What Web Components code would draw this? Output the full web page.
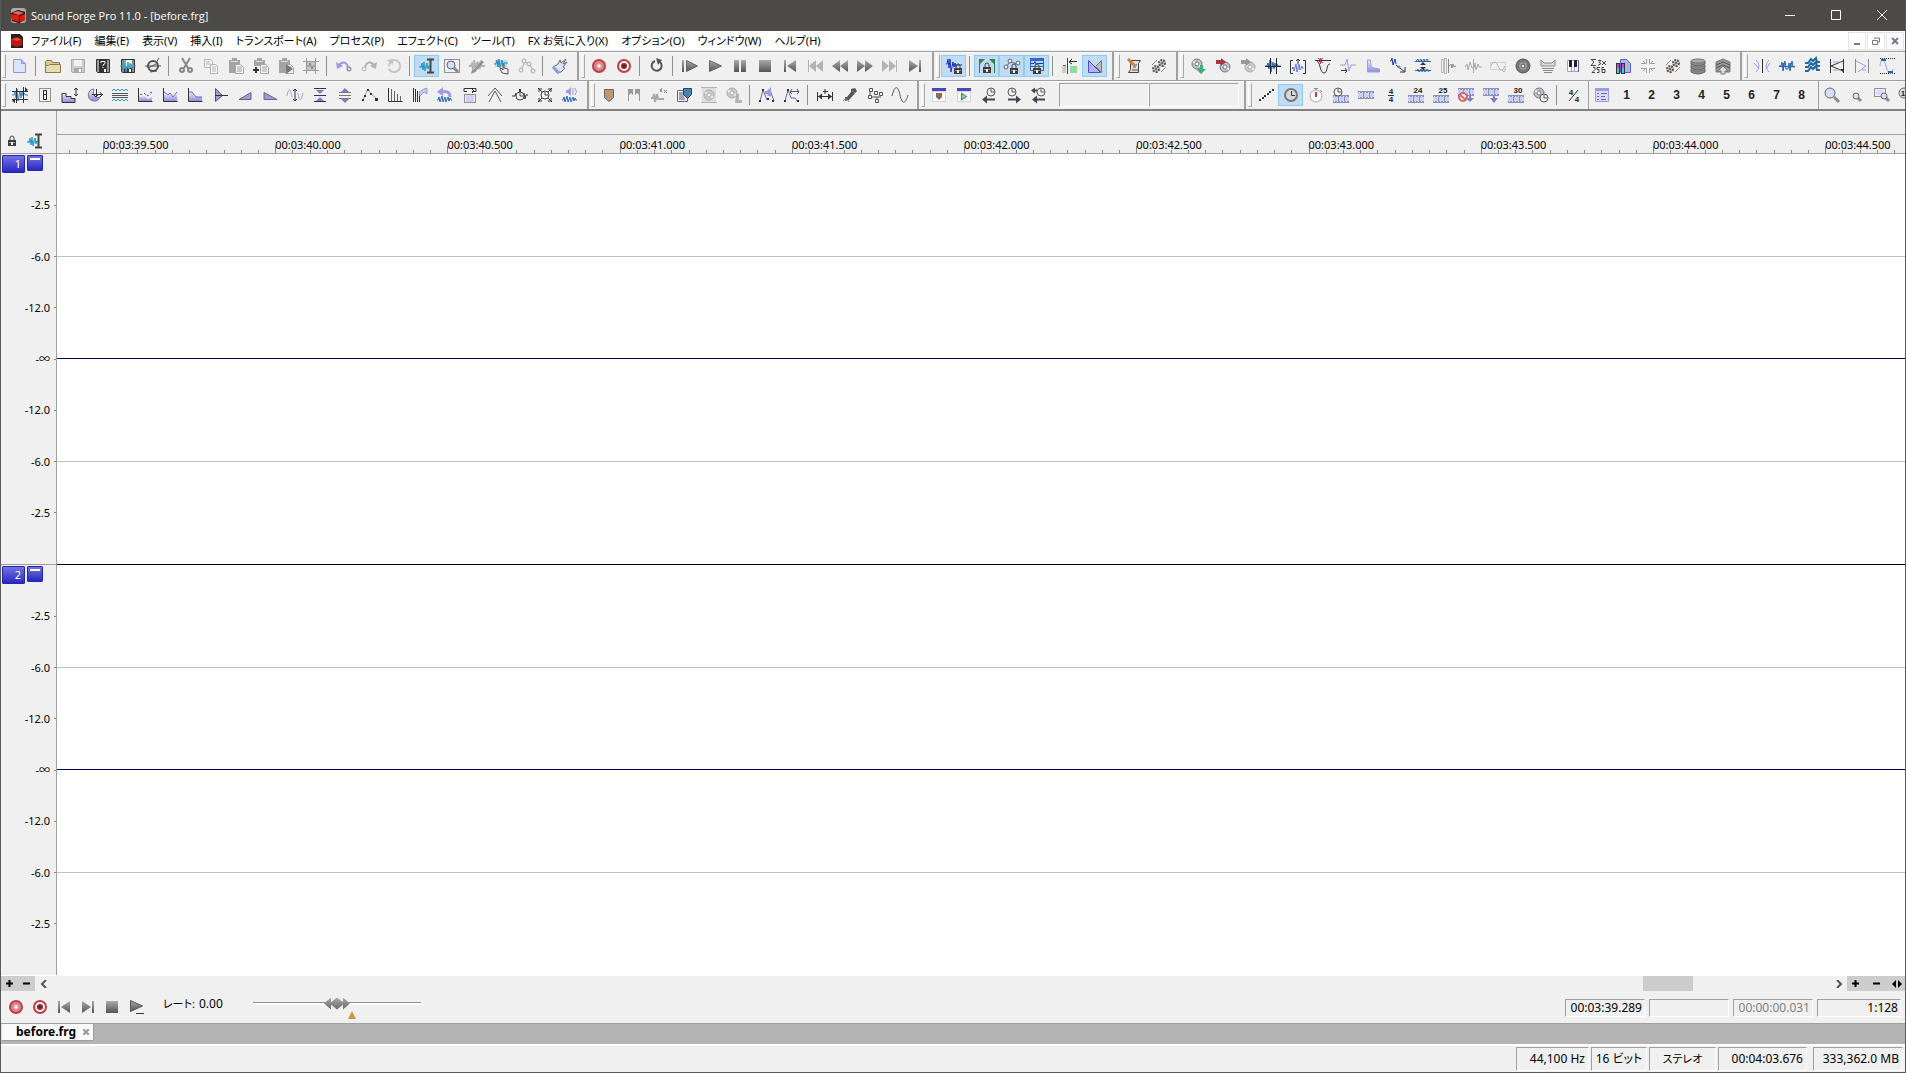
<!DOCTYPE html>
<html lang="ja">
<head>
<meta charset="utf-8">
<title>Sound Forge Pro 11.0 - [before.frg]</title>
<style>
  body {
    margin: 0;
    font: 12px/16px "Noto Sans", "Noto Sans CJK JP", sans-serif;
    color: #000;
    background: #f0f0f0;
  }
</style>
</head>
<body>
<sf-app></sf-app>

<script>
const K = '#333', G = '#888', D = '#b4b4b4', L = '#9c9ce0', B = '#2468b8', N = '#2030c8', R = '#c43c44';

const p = (d, stroke = K, fill = 'none', w = 1) => `<path d="${d}" stroke="${stroke}" fill="${fill}" stroke-width="${w}"/>`;
const f = (d, fill = K) => `<path d="${d}" fill="${fill}"/>`;
const r = (x, y, w, h, fill = K) => `<rect x="${x}" y="${y}" width="${w}" height="${h}" fill="${fill}"/>`;
const c = (x, y, rad, fill = 'none', stroke = K, w = 1) => `<circle cx="${x}" cy="${y}" r="${rad}" fill="${fill}" stroke="${stroke}" stroke-width="${w}"/>`;
const t = (x, y, s) => `<text x="${x}" y="${y}" text-anchor="middle" fill="#222">${s}</text>`;
const dot = (x, y, w, h, col = K) => `<rect x="${x}" y="${y}" width="${w}" height="${h}" fill="none" stroke="${col}" stroke-dasharray="1 1"/>`;
const wave = (col, w = 1) => p('M0 8h2l1-3 1 6 1-9 1 12 2-10 1 7 1-6 1 4 1-3 1 2h3', col, 'none', w);
const lowWave = col => p('M0 13h1l1-3 1 5 2-6 1 6 2-5 1 5 2-5 1 4 1-3 1 2h1', col, 'none', 1);
const film = (y = 8) => r(0, y, 16, 8, '#8a92bc') + r(0, y + 2, 16, 4, '#ccd0f4') +
  [1, 4, 7, 10, 13].map(x => r(x, y + 1, 1, 1, '#e8e8f8') + r(x, y + 6, 1, 1, '#e8e8f8')).join('') + r(5, y + 2, 1, 4, '#8a92bc') + r(11, y + 2, 1, 4, '#8a92bc');
const clock = (x, y, rad, col = '#555') => c(x, y, rad, '#f4f4f4', col) + p(`M${x} ${y - rad + 1}V${y}h${rad - 1}`, col);
const cd = (x, y, rad, a = '#bcc2d0', b = '#777') => c(x, y, rad, a, b) + p(`M${x} ${y}L${x - rad + 1} ${y - rad / 2}M${x} ${y}L${x + rad - 1} ${y + rad / 2}`, '#f2f2f2', 'none', 2) + c(x, y, 2, '#f8f8f8', b);
const lock = (x, y) => p(`M${x + 2} ${y + 4}v-2a2 2 0 0 1 4 0v2`, '#444', 'none', 1) + r(x, y + 4, 8, 6, '#3c3c3c') + r(x + 1, y + 6, 6, 1, '#999') + r(x + 3, y + 6, 2, 3, '#eee');
const glass = (x, y, rad) => p(`M${x + rad - 1} ${y + rad - 1}l${rad} ${rad}`, '#8a8a8a', 'none', 3) + c(x, y, rad, '#d4e0f4', '#667');
const disk = (a, b) => p('M1.5 1.5h13v13h-12l-1-1z', a, b) + r(4, 2, 8, 6, '#f0f0f0') + r(4, 10, 8, 4, a) + r(9, 11, 2, 3, '#fff');
const clip = (a, b) => r(1, 2, 11, 13, a) + r(4, 0, 5, 3, a) + r(3, 3, 7, 1, '#ddd') + p('M7.5 6.5h5l3 3v6h-8z', a, '#f4f4f4') + p(b, a);
const axes = p('M1.5 1v13.500h14');
const gear = (x, y, rad, col) => `<circle cx="${x}" cy="${y}" r="${rad}" fill="#ddd" stroke="${col}" stroke-width="2" stroke-dasharray="2 1"/>` + c(x, y, 1, '#fff', '#444');
const gears = gear(5, 11, 3, '#555') + gear(11, 5, 3, '#555') + p('M1 7l5-5M10 14l5-5', '#b88040');
const speaker = (x, y) => f(`M${x} ${y + 3}h2l3-3v9l-3-3h-2z`, L) + p(`M${x + 7} ${y + 1}v7`, L);
const winBox = inner => r(1, 1, 14, 14, '#cfd2ee') + r(2, 5, 12, 9, '#fafafa') + r(1, 1, 14, 3, '#4848b0') + inner;
const meta = `<defs><linearGradient id="m" x2="0" y2="1"><stop stop-color="#aaa"/><stop offset="1" stop-color="#555"/></linearGradient>
<linearGradient id="l" x2="0" y2="1"><stop stop-color="#ececff"/><stop offset="1" stop-color="#8c8cdc"/></linearGradient></defs>`;
const M = 'url(#m)', P = 'url(#l)';

const ICONS = {
  new: p('M1.500 1.500h8l4 4v9h-12z', '#9494e0', '#dbe5fa') + p('M9.500 1.500v4h4', '#9494e0', '#b8b8f4'),
  open: p('M.5 14.500v-11l1-1h5l1 2h7v10z', '#8a7c50', '#d8cc90') + p('M.5 14.500v-7h3l1-1h11v8z', '#8a7c50', '#e6dcb0'),
  save: disk('#aaa', '#ccc'),
  saveas: disk('#333', '#999') + r(4, 1, 8, 9, '#333') + p('M6 5v-1.500h4v2l-2 1.500v1M8 9v1', '#fff'),
  savewave: disk('#333', '#888') + wave('#38a8c8', 1),
  publish: c(8, 8, 5, '#ececec', '#555', 2) + p('M0 8h16M3 10l10-5M5 14l7-1M11 5l3-5', '#555', 'none', 1),
  cut: p('M4 0l6 10M12 0L6 10', G, 'none', 2) + c(4, 12, 2, 'none', G, 2) + c(12, 12, 2, 'none', G, 2),
  copy: p('M1.500 1.500h6l2 2v6h-8z', D, '#f4f4f4') + p('M3 4h4M3 6h4', D) + p('M7.500 6.500h5l2 2v7h-7z', D, '#f8f8f8') + p('M9 9h4M9 11h4M9 13h4', D),
  paste: clip('#a4a4a4', 'M9 9h5M9 11h5M9 13h5'),
  pastemix: clip('#a4a4a4', 'M9 9h5M9 11h5M9 13h5') + r(0, 8, 7, 8, '#f0f0f0') + r(2, 9, 2, 6) + r(0, 11, 6, 2),
  pasteplay: clip('#a4a4a4', 'M9 9h5') + f('M8 6l7 5-7 5z', '#777'),
  trim: r(3, 3, 10, 10, '#c4c4c4') + p('M0 3.500h16M0 12.500h16M3.500 0v16M12.500 0v16', '#999') + p('M4 8h2l1-3 2 6 1-3h2', G),
  undo: p('M3 8C5 3 11 3 12 10', L, 'none', 2) + f('M0 4l1 7 6-3z', L) + c(13, 11, 2, '#eee', '#667'),
  redo: p('M13 8C11 3 5 3 4 10', D, 'none', 2) + f('M16 4l-1 7-6-3z', D) + c(3, 11, 2, '#eee', D),
  repeat: p('M5 3a6 6 0 1 1-2 8M3 8a6 6 0 0 1 3-5', '#c4c4c4', 'none', 2) + f('M1 2l6-1v6z', '#c4c4c4'),
  edit: p('M0 9h2l1-4 1 7 1-8 1 9 2-8 1 6 1-3h2', '#2098c8', 'none', 1) + p('M1 9h9', '#2098c8') + p('M8 1.500h7M8 14.500h7M11.500 2v12', '#444', 'none', 2),
  magnify: dot(.5, 1.5, 15, 13) + glass(7, 7, 4),
  pencil: wave(D, 2) + f('M3 12l9-10 3 2-9 10-4 2z', '#929292') + p('M4 12l8-9', '#ccc'),
  event: r(1, 2, 12, 7, '#b4d4f0') + p('M0 6h2l1-4 1 7 1-8 1 9 2-8 1 6 1-3h4', '#248cbc', 'none', 1) + p('M8 15l-2-4 1-1 2 2v-6h1v4l4 1v5z', '#555', '#eee'),
  envelope: p('M2 12L6 4l4 2 4 6', '#aaa') + c(2, 12, 2, '#eee', '#aaa') + c(5, 3, 2, '#eee', '#aaa') + c(10, 6, 2, '#eee', '#aaa') + c(14, 13, 2, '#eee', '#aaa'),
  touch: p('M1 9l5-3 2-4 1 3 5-4-3 5 4-2-4 5 2 1-4 4-4 1z', '#667', '#dce4f4') + p('M1 9l6 6', '#8c9cdc', 'none', 3),
  rec: c(8, 8, 6, '#d8888c', R, 2) + c(8, 8, 2, '#fff', '#e8b0b0'),
  recarm: c(8, 8, 6, '#f8f0f0', R, 2) + c(8, 8, 2, '#401818', '#803038', 2),
  loop: p('M6 3a5 5 0 1 0 5 1', '#555', 'none', 2) + f('M7 0l6 2-4 5z', '#555'),
  playall: r(0, 2, 2, 12, M) + p('M4.500 2.500v11l11-5.500z', '#666', M),
  play: p('M2.500 2.500v11l12-5.500z', '#666', M),
  playdash: p('M2.500 1.500v11l12-5.500z', '#555', M) + r(8, 14, 8, 1),
  pause: r(2, 2, 5, 12, M) + r(9, 2, 5, 12, M),
  stop: r(2, 2, 12, 12, M),
  gostart: r(2, 2, 2, 12, M) + f('M14 2v12L5 8z', M),
  goend: r(12, 2, 2, 12, M) + f('M2 2v12l9-6z', M),
  back: r(1, 2, 1, 12, D) + f('M9 2v12L2 8zM16 2v12L9 8z', D),
  fwd: r(14, 2, 1, 12, D) + f('M0 2v12l7-6zM7 2v12l7-6z', D),
  rew: f('M8 2v12L0 8zM16 2v12L8 8z', M),
  ff: f('M0 2v12l8-6zM8 2v12l8-6z', M),
  wavelock: p('M0 6h1l1-5 1 9 1-9 1 13 2-10 1 5 1-4 1 4 1-2h5', N, 'none', 1) + lock(8, 6),
  regionlock: f('M0 1h6l-6 6zM16 1h-6l6 6z', '#388048') + r(0, 1, 1, 14, '#388048') + r(15, 1, 1, 14, '#388048') + lock(4, 5),
  envlock: p('M2 9L6 4l8 2', '#667') + c(2, 9, 2, '#def', '#667') + c(6, 3, 2, '#def', '#667') + c(14, 5, 2, '#def', '#667') + lock(6, 6),
  eventlock: r(1, 0, 14, 13, '#3c62c8') + r(2, 3, 12, 5, '#a8e0f0') + p('M2 5.500h3l1-2 1 3 1-1h6', N) + r(2, 9, 12, 3, '#c8dcf4') + lock(4, 6),
  autosnap: p('M5.500 0v16', '#444') + p('M7 3.500h8M10 1l-3 3 3 2') + r(0, 8, 4, 7, '#ccc') + r(8, 8, 7, 7, '#90dca0') + p('M1 7.500h3', '#666'),
  crossfade: p('M1.500 2.500v12h12z', '#5050c4', '#b0b4f4') + p('M14.500 2.500v12l-6-6z', '#777', '#bbb'),
  script: p('M3.500 2.500h11l-2 3v9h-10l2-3v-6z', '#444', '#e6dfcb') + p('M7 7h4M7 9h3M6 12h6', '#555') + p('M2 1l6 6', '#d08040', 'none', 3),
  gears: gears,
  cddown: cd(7, 6, 5) + f('M10 7h3v4h3l-5 5-5-5h4z', '#40b078'),
  cdin: cd(10, 9, 5) + f('M1 2h5V0l5 4-5 4V6H1z', '#a83440'),
  cdout: cd(10, 9, 5, '#ccc', '#aaa') + f('M1 2h5V0l5 4-5 4V6H1z', '#999'),
  wavecut: wave(B, 1) + p('M3 8v-3M4 11V6M6 3v10', B, 'none', 1) + p('M5.500 0v16M11.500 0v16M0 8.500h16', '#223'),
  wavebracket: p('M3 2.500H.5v13H3M13 2.500h2.500v13H13M8 6V1M6 3l2-2 2 2', K) + p('M2 11l1-2 1 4 2-7 1 8 2-8 1 6 2-4 1 3', '#6878d8', 'none', 1),
  peak: p('M0 2.500h16', K) + p('M2 3c3 0 3 12 7 12s2-9 6-9', K) + p('M3 0l5 5M8 0L3 5M5.500 0v6', R),
  wavearrow: p('M0 7h5l2-6 2 12 2-6h5', L) + p('M1 12.500h6M5 10l2 3-2 2', K),
  fadecurve: f('M2 2h3c0 7 2 8 9 8v4H2z', P) + p('M2.500 2v12h12v-3c-7 0-9-1-9-9z', L),
  wavediag: p('M0 3h1l1-3 1 7 2-6 1 5', N) + p('M6 7l9 7M10 14h5V9', K) + c(9, 9, 1, '#fff', B),
  wavesqueeze: p('M1 3l2-2 1 3 2-3 1 3 2-3 1 3 2-3 2 3M1 13l2-2 1 3 2-3 1 3 2-3 1 3 2-3 2 3', B, 'none', 1) + p('M0 3.500h16M0 12.500h16', B) + f('M8 4l3 3H5zM8 12l3-3H5z'),
  noise: dot(1.5, 1.5, 2, 13, G) + dot(4.5, .5, 2, 15, G) + p('M8.500 1v14M9 8l2-2 1 4 1-4 1 3 2-1', G),
  noisecut: p('M0 9l2-3 1 6 2-8 2 6h2l1-5 1 7 2-6 1 3h3M8.500 1v14', '#aaa'),
  sinedim: dot(.5, 4.5, 15, 7, D) + p('M1 8c3-7 6-3 7 0s4 7 7 0M11 11l3 3 2-3', D),
  vinyl: c(8, 8, 7, '#777', '#555') + c(8, 8, 4, '#aaa', '#888') + c(8, 8, 2, '#eee', '#444'),
  eq: p('M1 2l3 3h8l3-3v6H1z', '#888', '#ddd') + p('M2 10.500h12M3 12.500h10M4 14.500h8', G),
  piano: p('M2.500 2.500h11v11h-11z', L, '#fff') + p('M6.500 8v6M9.500 8v6', L) + r(4, 2, 3, 7, '#223') + r(9, 2, 3, 7, '#223') + r(13, 2, 1, 12, '#6060a0'),
  sigma: p('M6 1.500H1L4 4 1 7.500h5M8 2.500h3l-2 2 2 1-3 2M12 3l4 4M16 3l-4 4M3 9.500h2v2L2 14.500h3M10 9.500H7v2h2v3H7M14 9.500h-2v5h3v-3h-3', '#444'),
  library: p('M5.500 1.500h6l4 4v9h-10z', '#6060c0', '#a8b4f0') + r(1, 5, 4, 11) + r(2, 6, 2, 4, '#d048c0') + r(2, 10, 2, 5, '#48c8c0') + r(6, 5, 4, 11) + r(7, 6, 2, 4, '#d048c0') + r(7, 10, 2, 5, '#48c8c0'),
  burst: p('M6.500 1v4.500H1M9.500 1v4.500H15M6.500 15v-4.500H1M9.500 15v-4.500H15', '#a0a0a0') + p('M6 6L3 3M10 6l3-3M6 10l-3 3M10 10l3 3', '#a0a0a0'),
  stack: [9, 5, 1].map(y => p(`M1 ${y + 2}v3q7 4 14 0v-3`, '#666', '#888') + `<ellipse cx="8" cy="${y + 2}" rx="7" ry="2" fill="#aaa" stroke="#777"/>`).join(''),
  stackup: p('M1 4l7-3 7 3v10H1z', '#777', '#999') + p('M1 7l7-3 7 3M1 10l7-3 7 3', '#555') + p('M8 8l5 5h-3v3H6v-3H3z', '#777', '#ddd'),
  mirror: p('M8.500 1v14', K) + p('M2 2q6 6 0 12M0 5l5 6M15 2q-6 6 0 12M16 5l-4 6', L),
  twowaves: p('M0 8h2l1-4 1 9 2-10 1 8h2l1-6 1 8 2-10 1 6h2M0 8.500h16', B, 'none', 1) + p('M4.500 5v7M11.500 5v7', B, 'none', 1),
  waves: [3, 7, 11].map(y => p(`M1 ${y + 2}h3l3-4 2 2 3-3 1 4h3`, '#2468a0', 'none', 2)).join(''),
  envstart: p('M1.500 1v14M14.500 1v14M2 8l12-5M2 8l12 5', K) + p('M4 4h9M4 12h9', L) + f('M11 11h3v3z'),
  envend: p('M1.500 1v14M14.500 1v14', G) + p('M2 3l10 5-8 6M8 12h4', L),
  sineline: `<path d="M1 .5h15M1 15.500h15" stroke="${K}" stroke-dasharray="1 1"/>` + p('M1 8c1-8 4-8 6 0s5 10 7 3', L, 'none', 1) + r(2, 1, 5, 2, B) + r(9, 13, 5, 2, B),

  crop: wave('#3888cc', 1) + p('M0 4.500h16M0 12.500h16M4.500 1v15M11.500 0v16', '#333') + f('M13 0l3 3-3 2zM3 11l-3 3 3 2z'),
  eight: dot(2.5, 1.5, 11, 13) + p('M6.500 3.500h3v4h-3zM6.500 7.500h3v5h-3z', '#222', 'none', 1),
  stairs: p('M0 15.500V6.500h4v3h5v2h4v4z', K, P) + p('M14 1v8M12 3l2-2 2 2M12 7l2 2 2-2', K),
  moon: p('M7 2a6 6 0 1 0 6 8c-5 2-8-2-6-8z', '#778', P) + p('M5 7.500h11M13 5l2 3-2 2M9.500 2v8M7 8l2 2 2-2'),
  fourwaves: [3, 13].map(y => p(`M0 ${y + 1}l2-2 2 2 2-2 2 2 2-2 2 2 2-2 2 2`, '#28a0d0')).join('') + p('M0 6.500h16M0 8.500h16M0 10.500h16', '#555'),
  graph1: axes + f('M2 14V8l3 2 3-1 3 3 4-2v4z', P) + p('M3 7l2 1M7 6l2 2M10 8l2 1M13 5l2 1', '#4848c0'),
  graph2: axes + f('M2 14V6l3 3 3-2 3 3 4-3v7z', P) + p('M2 5l4 3 2-2 3 4 4-5', '#6868c0'),
  graph3: axes + f('M2 14V5h3l3 5h7v4z', P) + p('M2 5h3l4 5h6', '#6868c0'),
  wedge: p('M3.500 1.500v13l7-6z', '#556', L) + p('M3 8.500h13'),
  rise: p('M2 12.500h12v-7z', '#667', L),
  fall: p('M2 5.500v7h13z', '#667', L),
  sinearrow: p('M0 9c2-10 4-6 5 1M11 6c1 9 3 9 5 0', L) + p('M8 2v12M6 4l2-2 2 2M6 12l2 2 2-2', K),
  compress: p('M2 1.500h12M2 8.500h12M2 14.500h12') + f('M8 7l4-4H4zM8 10l4 4H4z', '#7c7ccc'),
  expand: p('M2 5.500h12M2 8.500h12M2 11.500h12', '#777') + f('M8 1l4 4H4zM8 16l4-4H4z', '#7c7ccc'),
  points: p('M1 13L6 2l3 5 5 4', L, 'none', 1) + r(0, 12, 2, 2) + r(2, 8, 2, 2) + r(5, 2, 2, 2) + r(8, 6, 2, 2) + r(13, 11, 3, 3),
  bars: axes + p('M4.500 2v12M7.500 4v10M10.500 7v7M13.500 9v5', '#667'),
  barswoosh: p('M1.500 1v14M3.500 2v13M5.500 4v11M7.500 7v8', K) + p('M7 5l5-3 3-1v6l-3-2-4 4z', L, '#c8c8f4'),
  wavebacks: lowWave(B) + p('M4 5c8-2 9 2 9 5', L, 'none', 3) + f('M0 5l6-5v9z', L),
  reel: p('M5 4.500H2v-3h12v3h-4M10 2l2 2-2 2', K) + r(4, 8, 8, 7, '#d0d0f8') + dot(2.5, 7.5, 11, 8),
  peaks: p('M2 15L8 4l6 11M1 9l7-8 7 8', '#555'),
  clockwave: p('M0 9h3l1-3M12 6l1 6 1-4h2', K) + clock(8, 9, 4, '#345') + r(7, 2, 2, 3),
  clockbox: clock(8, 8, 4, '#345') + p('M2 5V2h3M11 2h3v3M2 11v3h3M11 14h3v-3M1 1l4 4M15 1l-4 4M1 15l4-4M15 15l-4-4'),
  speakerwave: speaker(4, 0) + p('M13 1q3 4 0 7', L) + lowWave(B),

  marker: p('M3.500 2.500h9v8l-4.500 4-4.500-4z', '#666', '#b89878'),
  region: f('M2 2h5v6l-2-2-3 3zM14 2H9v6l2-2 3 3z', '#999') + p('M2.500 2v12M13.500 2v12', '#999'),
  sparkwave: p('M0 11h2l1-4 1 8 2-8 1 5h6', '#aaa', 'none', 2) + p('M9 2l2 3M11 1l-2 4M13 3l3 3M16 3l-3 3', G),
  markerpage: p('M1.500 3.500h10v11h-10z', '#667', '#f0f0f8') + p('M3 6h6M3 8h5M3 10h5M3 12h6', '#557') + p('M7.500 1.500h8v6l-4 4-4-4z', '#345', '#4884b0'),
  discpage: r(1, 1, 14, 14, '#ddd') + p('M0 .5h16M0 15.500h16', D) + cd(8, 8, 5, '#ccc', '#aaa'),
  disccursor: cd(6, 6, 5, '#ccc', '#aaa') + f('M10 7h3v6h3v3h-7z', D),
  envspeaker: p('M1 14L4 3l4 10M9 9l2-6 4 11', '#6868a8') + f('M6 4h2l4-4v10L8 7H6z', L) + r(0, 13, 2, 2) + r(3, 2, 2, 2) + r(13, 13, 2, 2) + r(8, 11, 2, 2),
  envarrows: p('M1 14L4 3l3 8 4 0 3 4', '#6868a8') + p('M6 4.500h9M8 2L6 5l2 2M13 2l2 3-2 2', '#556') + r(0, 13, 2, 2) + r(3, 2, 2, 2) + r(13, 13, 2, 2),
  measure: p('M.5 5v9M15.500 5v9M1 9.500h14M8 2v5M6 4.500h5', K) + f('M1 9.500l4-3v6zM15 9.500l-4-3v6z'),
  phone: f('M9 2l4-1 2 3-8 9-4 1 0-4 2 0 4-5z', '#555') + p('M1 14q3-5 6 1M10 4l3 2', '#888'),
  nodes: p('M2.500 1.500h3v3h-3zM7.500 4.500h3v3h-3zM12.500 5.500h3v3h-3zM1.500 8.500h3v3h-3zM8.500 12.500h3v3h-3zM3 5v3M5 10h9M10 10v2', '#555'),
  sine: p('M0 9C3-3 6-1 8 8s5 10 8 0', '#556'),
  winmarker: winBox(f('M5 6h6v4l-3 3-3-3z', '#886858')),
  winplay: winBox(p('M5.500 6v7l5-3.500z', '#388058', '#90d0a0')),
  clockleft: clock(10, 5, 4) + p('M3 12.500h11', '#445', 'none', 2) + f('M1 12.500l5-4v8z', '#445'),
  clockright: clock(6, 5, 4) + p('M2 12.500h11', '#445', 'none', 2) + f('M15 12.500l-5-4v8z', '#445'),
  clockboth: clock(10, 5, 4) + p('M3 12.500h11M2 3.500h4', '#445', 'none', 2) + f('M1 12.500l5-4v8zM0 3.500l4-3v6z', '#445'),

  dots: [[1, 12], [4, 10], [6, 8], [9, 6], [11, 4], [14, 2]].map(([x, y]) => r(x, y, 2, 2)).join(''),
  clock: c(8, 8, 6, '#d8d8d8', '#777', 2) + p('M8.500 4v4.500H12', '#333', 'none', 1),
  stopwatch: c(8, 9, 6, '#fafafa', '#aaa') + p('M8 5v5', R, 'none', 2) + p('M6 1.500h4M8 1v2', '#888') + p('M12 3l2 2', G),
  clockfilm: film() + clock(5, 5, 4),
  film: film(4),
  beat: t(8, 7, '4') + p('M5 8.500h6') + t(8, 15, '4'),
  f24: film() + t(10, 6, '24'),
  f25: film() + t(10, 6, '25'),
  f30: film() + t(10, 6, '30'),
  nofilm: film(1) + p('M12 8v5', '#7c7ccc', 'none', 2) + f('M8 11h8l-4 4z', '#7c7ccc') + c(5, 10, 4, '#eee', '#d06868', 2) + p('M2 8l6 5', '#d06868', 'none', 2),
  filmdown: film(1) + p('M11 8v5', '#7c7ccc', 'none', 2) + f('M7 11h8l-4 5z', '#7c7ccc'),
  cdclock: cd(6, 6, 5) + clock(11, 11, 4),
  meter: t(5, 8, '4') + t(11, 15, '4') + p('M3 14L12 3'),
  list: p('M1.500 1.500h13v13h-13z', L, '#dcdcfa') + r(1, 1, 14, 3, L) + p('M3 6.500h2M7 6.500h6M3 9.500h2M7 9.500h4M3 12.500h2M7 12.500h5', '#6868c0'),
  magbig: glass(6, 6, 5),
  magsmall: glass(7, 9, 3),
  magselect: dot(.5, 1.5, 11, 8) + r(2, 3, 8, 5, '#dcdcfa') + glass(10, 9, 3),
  magone: glass(5, 6, 5) + t(4, 9, '1'),
  lock: `<g transform="translate(4 3)">${lock(0, 0)}</g>`
};

const svg = name => `<svg width="16" height="16" viewBox="0 0 16 16" aria-hidden="true">${meta}${ICONS[name] || ''}</svg>`;

class ToolBand extends HTMLElement {
  constructor() {
    super();
    this.attachShadow({ mode: 'open' });
  }

  // items: icon names, "|" for a separator, "*" before a pressed button, a digit for a text button
  connectedCallback() {
    const items = this.getAttribute('items').split(' ').map(item => {
      if (item === '|') {
        return '<i></i>';
      }
      const on = item[0] === '*';
      const name = on ? item.slice(1) : item;
      const face = ICONS[name] ? svg(name) : name;
      return `<button type="button" aria-label="${name}" ${on ? 'class="on" aria-pressed="true"' : ''}>${face}</button>`;
    });
    this.shadowRoot.innerHTML = `
      <style>
        :host {
          display: flex;
          flex: none;
          align-items: center;
          box-sizing: border-box;
          height: 28px;
          padding: 0 5px 0 6px;
          border-right: 2px solid #a0a0a0;
          margin-right: 1px;
          position: relative;
        }

        :host([grip])::before {
          content: "";
          position: absolute;
          left: 1px;
          top: 2px;
          bottom: 2px;
          width: 2px;
          border: 1px solid #a8a8a8;
          border-top-color: #fff;
          border-left-color: #fff;
        }

        :host([plain]) {
          padding: 0 4px 0 0;
        }

        :host([tight]) {
          padding-right: 2px;
        }

        :host([plain]), :host([tight]) {
          border-right-width: 1px;
          margin: 0;
        }

        :host([last]) {
          border-right: 0;
        }

        button {
          width: 25px;
          height: 22px;
          flex: none;
          display: flex;
          align-items: center;
          justify-content: center;
          padding: 0;
          border: 1px solid transparent;
          background: none;
          color: #222;
          font: bold 12px/16px "Liberation Sans", sans-serif;
        }

        .on {
          background: #c0dcf3;
          border-color: #90c8f6;
        }

        i {
          width: 1px;
          height: 20px;
          margin: 0 4px 0 3px;
          background: #909090;
        }

        svg {
          overflow: visible;
        }

        text {
          font: bold 8px "Liberation Sans", sans-serif;
        }
      </style>
      ${items.join('')}
      <slot></slot>
    `;
  }
}
customElements.define('tool-band', ToolBand);

class SfBox extends HTMLElement {
  constructor() {
    super();
    this.attachShadow({ mode: 'open' });
    this.shadowRoot.innerHTML = `
      <style>
        :host {
          display: block;
          flex: none;
          box-sizing: border-box;
          height: 18px;
          padding: 0 2px;
          border: 1px solid #fff;
          border-top-color: #a0a0a0;
          border-left-color: #a0a0a0;
          text-align: right;
          white-space: nowrap;
        }
      </style>
      <slot></slot>
    `;
  }
}
customElements.define('sf-box', SfBox);

class TitleBar extends HTMLElement {
  constructor() {
    super();
    this.attachShadow({ mode: 'open' });
    this.shadowRoot.innerHTML = `
      <style>
        :host {
          display: flex;
          align-items: center;
          height: 31px;
          flex: none;
          background: #4b4a47;
          color: #fff;
          padding-left: 9px;
        }

        h1 {
          flex: 1;
          margin: 0 0 0 5px;
          font: 11px/16px "Open Sans", "Noto Sans", sans-serif;
        }

        button {
          width: 46px;
          height: 30px;
          padding: 0;
          border: 0;
          background: none;
        }
      </style>
      <svg width="16" height="16" viewBox="0 0 16 16"><rect x="1" y="0" width="15" height="15" rx="3" fill="#aaa"/><path d="M1 5l7-3 7 2v8l-6 3-7-2z" fill="#200"/><path d="M2 5l6-2 6 2-5 2z" fill="#e66"/><path d="M1 6l8 1v7l-7-2zM10 8l5-2v6l-5 2z" fill="#d8200c"/></svg>
      <h1><slot></slot></h1>
      <button aria-label="Minimize"><svg width="10" height="10"><path d="M0 5.500h10" stroke="#fff"/></svg></button>
      <button aria-label="Maximize"><svg width="10" height="10"><path d="M.5.500h9v9h-9z" stroke="#fff" fill="none"/></svg></button>
      <button aria-label="Close"><svg width="10" height="10"><path d="M0 0l10 10M10 0L0 10" stroke="#fff"/></svg></button>
    `;
  }
}
customElements.define('title-bar', TitleBar);

class MenuBar extends HTMLElement {
  constructor() {
    super();
    this.attachShadow({ mode: 'open' });
    const menus = ['ファイル(F)', '編集(E)', '表示(V)', '挿入(I)', 'トランスポート(A)', 'プロセス(P)', 'エフェクト(C)', 'ツール(T)', 'FX お気に入り(X)', 'オプション(O)', 'ウィンドウ(W)', 'ヘルプ(H)'];
    this.shadowRoot.innerHTML = `
      <style>
        :host {
          display: flex;
          align-items: center;
          height: 19px;
          flex: none;
          background: #fff;
          padding-left: 9px;
          border-bottom: 1px solid #f0f0f0;
        }

        nav {
          display: flex;
          flex: 1;
          gap: 13px;
          margin-left: 7px;
        }

        nav button {
          padding: 0;
          border: 0;
          background: none;
          color: #000;
          font: 11px/18px "Noto Sans", "Noto Sans CJK JP", sans-serif;
          font-feature-settings: "palt";
          white-space: nowrap;
        }

        .win {
          width: 18px;
          height: 18px;
          margin-right: 1px;
          padding: 0;
          border: 1px solid #e4e4e4;
          background: #fff;
        }

        .win svg {
          display: block;
          margin: auto;
        }
      </style>
      <svg width="14" height="16" viewBox="0 0 14 16"><path d="M1 1h9l3 3v11H1z" fill="#222"/><path d="M1 6l6-2 5 2v6l-5 2-6-2z" fill="#c01810"/><path d="M2 6l5-1 4 1-4 2z" fill="#f05030"/></svg>
      <nav>${menus.map(m => `<button type="button">${m}</button>`).join('')}</nav>
      <button class="win" aria-label="Minimize document"><svg width="8" height="8"><path d="M1 7h6" stroke="#6c7c8c" stroke-width="2"/></svg></button>
      <button class="win" aria-label="Restore document"><svg width="8" height="8"><path d="M2.500 2V1h5v4H6M.5 3.500h5v4h-5z" stroke="#6c7c8c" fill="none"/></svg></button>
      <button class="win" aria-label="Close document"><svg width="8" height="8"><path d="M1 1l6 6M7 1L1 7" stroke="#6c7c8c" stroke-width="2"/></svg></button>
    `;
  }
}
customElements.define('menu-bar', MenuBar);

class SfToolbars extends HTMLElement {
  constructor() {
    super();
    this.attachShadow({ mode: 'open' });
    this.shadowRoot.innerHTML = `
      <style>
        :host {
          display: block;
          flex: none;
          border-top: 1px solid #a0a0a0;
        }

        .row {
          display: flex;
          height: 28px;
          overflow: hidden;
          border-bottom: 1px solid #a0a0a0;
          box-shadow: inset 0 1px #fafafa;
        }

        .row:last-child {
          border-bottom: 2px solid #808080;
        }

        sf-box {
          width: 90px;
          height: 24px;
        }

        sf-box:first-of-type {
          margin-left: 8px;
        }
      </style>
      <div class="row">
        <tool-band grip items="new | open save saveas savewave publish | cut copy paste pastemix pasteplay trim | undo redo repeat | *edit magnify pencil event envelope | touch"></tool-band>
        <tool-band grip items="rec recarm | loop | playall play pause stop gostart back rew ff fwd goend"></tool-band>
        <tool-band grip items="*wavelock | *regionlock *envlock *eventlock | autosnap *crossfade"></tool-band>
        <tool-band grip items="script gears"></tool-band>
        <tool-band grip items="cddown cdin cdout wavecut wavebracket peak wavearrow fadecurve wavediag wavesqueeze noise noisecut sinedim vinyl eq piano sigma library burst gears stack stackup"></tool-band>
        <tool-band grip last items="mirror twowaves waves envstart envend sineline burst"></tool-band>
      </div>
      <div class="row">
        <tool-band grip items="crop eight stairs moon fourwaves graph1 graph2 graph3 wedge rise fall sinearrow compress expand points bars barswoosh wavebacks reel peaks clockwave clockbox speakerwave"></tool-band>
        <tool-band grip items="marker region sparkwave markerpage discpage disccursor | envspeaker envarrows | measure phone nodes sine"></tool-band>
        <tool-band grip items="winmarker winplay clockleft clockright clockboth"><sf-box></sf-box><sf-box></sf-box></tool-band>
        <tool-band grip tight items="dots *clock stopwatch clockfilm film beat f24 f25 nofilm filmdown f30 cdclock | meter"></tool-band>
        <tool-band plain items="list 1 2 3 4 5 6 7 8"></tool-band>
        <tool-band plain last items="magbig magsmall magselect magone"></tool-band>
      </div>
    `;
  }
}
customElements.define('sf-toolbars', SfToolbars);

class TimeRuler extends HTMLElement {
  constructor() {
    super();
    this.attachShadow({ mode: 'open' });
    const times = ['39.500', '40.000', '40.500', '41.000', '41.500', '42.000', '42.500', '43.000', '43.500', '44.000', '44.500'];
    const ticks = '<i></i>'.repeat(10);
    this.shadowRoot.innerHTML = `
      <style>
        :host {
          display: flex;
          flex: none;
          height: 43px;
          border-bottom: 1px solid #a0a0a0;
          box-sizing: border-box;
        }

        .head {
          width: 55px;
          flex: none;
          box-sizing: border-box;
          display: flex;
          align-items: flex-end;
          gap: 7px;
          padding: 0 0 4px 3px;
        }

        .strip {
          flex: 1;
          min-width: 0;
          display: flex;
          flex-direction: column;
          border-left: 1px solid #a0a0a0;
        }

        .blank {
          height: 23px;
          flex: none;
          border-bottom: 1px solid #a0a0a0;
        }

        .scale {
          flex: 1;
          display: flex;
          overflow: hidden;
        }

        .lead {
          flex: 0 0 46px;
          display: flex;
          justify-content: flex-end;
          align-items: flex-end;
          overflow: hidden;
        }

        .lead i {
          flex: 0 0 16px;
        }

        .cell {
          flex: 0 0 9.320%;
          display: flex;
          align-items: flex-end;
          position: relative;
        }

        i {
          flex: 1;
          height: 3px;
          border-left: 1px solid #888;
        }

        .cell i:first-of-type {
          height: 7px;
        }

        span {
          position: absolute;
          left: 0;
          top: 2px;
          font-size: 11px;
          line-height: 16px;
        }
      </style>
      <div class="head">${svg('lock')}${svg('edit')}</div>
      <div class="strip">
        <div class="blank"></div>
        <div class="scale">
          <div class="lead">${'<i></i>'.repeat(3)}</div>
          ${times.map(s => `<div class="cell"><span>00:03:${s}</span>${ticks}</div>`).join('')}
        </div>
      </div>
    `;
  }
}
customElements.define('time-ruler', TimeRuler);

class WaveChannel extends HTMLElement {
  constructor() {
    super();
    this.attachShadow({ mode: 'open' });
    const levels = ['-2.5', '-6.0', '-12.0', '-∞', '-12.0', '-6.0', '-2.5'];
    this.shadowRoot.innerHTML = `
      <style>
        :host {
          display: flex;
          flex: 1 1 0;
          min-height: 0;
        }

        .levels {
          width: 55px;
          flex: none;
          display: flex;
          flex-direction: column;
          justify-content: center;
          border-right: 1px solid #a0a0a0;
          position: relative;
        }

        .level {
          flex: 0 0 12.500%;
          display: flex;
          align-items: center;
          justify-content: flex-end;
          gap: 4px;
          font-size: 11px;
        }

        .level::after {
          content: "";
          width: 2px;
          height: 1px;
          background: #888;
        }

        .badges {
          position: absolute;
          left: 1px;
          top: 1px;
          display: flex;
          gap: 2px;
          align-items: flex-start;
        }

        button {
          height: 18px;
          width: 23px;
          padding: 0 3px 0 0;
          border: 1px solid #2424b8;
          border-radius: 1px;
          background: linear-gradient(#7474e0, #2828c0);
          color: #fff;
          font: 11px/16px "Noto Sans", sans-serif;
          text-align: right;
        }

        .fold {
          width: 16px;
          height: 16px;
          padding: 0;
        }

        .fold::before {
          content: "";
          display: block;
          width: 10px;
          height: 2px;
          margin: -5px auto 0;
          background: #fff;
        }

        .wave {
          flex: 1;
          display: flex;
          flex-direction: column;
          background: #fff;
        }

        .wave div {
          flex: 1;
          border-bottom: 1px solid #c0c0c0;
        }

        .wave div:nth-child(2) {
          border-color: #000060;
        }

        .wave div:last-child {
          border-color: transparent;
        }
      </style>
      <div class="levels">
        <div class="badges"><button type="button"><slot></slot></button><button type="button" class="fold" aria-label="Minimize channel"></button></div>
        ${levels.map(l => `<div class="level">${l}</div>`).join('')}
      </div>
      <div class="wave"><div></div><div></div><div></div><div></div></div>
    `;
  }
}
customElements.define('wave-channel', WaveChannel);

class ScrollStrip extends HTMLElement {
  constructor() {
    super();
    this.attachShadow({ mode: 'open' });
    const plus = '<svg width="7" height="7"><path d="M3.500 0v7M0 3.500h7" stroke="#000" stroke-width="2"/></svg>';
    const minus = '<svg width="7" height="7"><path d="M0 3.500h7" stroke="#000" stroke-width="2"/></svg>';
    this.shadowRoot.innerHTML = `
      <style>
        :host {
          display: flex;
          flex: none;
          height: 15px;
          border-top: 1px solid #fff;
        }

        button {
          display: flex;
          align-items: center;
          justify-content: center;
          width: 17px;
          padding: 0;
          border: 0;
          background: #cdcdcd;
        }

        .wide {
          width: 24px;
        }

        .arrow {
          background: none;
        }

        .track {
          flex: 1;
          display: flex;
        }

        .track::before {
          content: "";
          flex: 1592;
        }

        .thumb {
          flex: 50;
          background: #cdcdcd;
        }

        .track::after {
          content: "";
          flex: 137;
        }
      </style>
      <button aria-label="Zoom in vertically">${plus}</button>
      <button aria-label="Zoom out vertically">${minus}</button>
      <button class="arrow" aria-label="Scroll left"><svg width="8" height="8"><path d="M6 0L2 4l4 4" stroke="#555" stroke-width="2" fill="none"/></svg></button>
      <div class="track"><div class="thumb"></div></div>
      <button class="arrow" aria-label="Scroll right"><svg width="8" height="8"><path d="M2 0l4 4-4 4" stroke="#555" stroke-width="2" fill="none"/></svg></button>
      <button aria-label="Zoom in">${plus}</button>
      <button class="wide" aria-label="Zoom out">${minus}</button>
      <button aria-label="Zoom selection"><svg width="10" height="8"><path d="M4 0v8L0 4zM6 0v8l4-4z"/></svg></button>
    `;
  }
}
customElements.define('scroll-strip', ScrollStrip);

class TransportBar extends HTMLElement {
  constructor() {
    super();
    this.attachShadow({ mode: 'open' });
    const buttons = ['rec', 'recarm', 'gostart', 'goend', 'stop', 'playdash'];
    this.shadowRoot.innerHTML = `
      <style>
        :host {
          display: flex;
          flex: none;
          height: 32px;
          padding: 0 4px 0 3px;
        }

        button {
          width: 24px;
          height: 32px;
          padding: 0;
          border: 0;
          background: none;
        }

        button svg {
          display: block;
          margin: auto;
        }

        .rate {
          display: flex;
          align-items: center;
          height: 25px;
          margin-left: 15px;
        }

        label {
          width: 36px;
          font-size: 11px;
          font-feature-settings: "palt";
          white-space: nowrap;
        }

        output {
          width: 54px;
        }

        .slider {
          position: relative;
        }

        input {
          appearance: none;
          display: block;
          width: 168px;
          height: 14px;
          margin: 0;
          background: linear-gradient(#909090 50%, #fff 50%) center / 100% 3px no-repeat;
        }

        input::-webkit-slider-thumb {
          appearance: none;
          width: 26px;
          height: 12px;
          background: linear-gradient(#a8a8a8, #666);
          clip-path: polygon(0 50%, 27% 0, 27% 40%, 50% 0, 73% 40%, 73% 0, 100% 50%, 73% 100%, 73% 60%, 50% 100%, 27% 60%, 27% 100%);
        }

        .mark {
          position: absolute;
          left: 95px;
          top: 14px;
        }

        .boxes {
          flex: 1;
          display: flex;
          justify-content: flex-end;
          align-items: center;
          gap: 4px;
          height: 34px;
        }

        sf-box {
          width: 80px;
        }

        sf-box:last-child {
          width: 84px;
        }

        .dim {
          color: #808080;
        }
      </style>
      ${buttons.map(b => `<button type="button" aria-label="${b}">${svg(b)}</button>`).join('')}
      <div class="rate">
        <label for="rate">レート:</label>
        <output for="rate">0.00</output>
        <div class="slider">
          <input id="rate" type="range" min="-100" max="100" value="0">
          <svg class="mark" width="8" height="8"><path d="M4 0l4 8H0z" fill="#c89848"/></svg>
        </div>
      </div>
      <div class="boxes">
        <sf-box>00:03:39.289</sf-box>
        <sf-box></sf-box>
        <sf-box class="dim">00:00:00.031</sf-box>
        <sf-box>1:128</sf-box>
      </div>
    `;
  }
}
customElements.define('transport-bar', TransportBar);

class FileTabs extends HTMLElement {
  constructor() {
    super();
    this.attachShadow({ mode: 'open' });
    this.shadowRoot.innerHTML = `
      <style>
        :host {
          display: flex;
          align-items: flex-start;
          flex: none;
          box-sizing: border-box;
          height: 21px;
          background: #b4b4b4;
          border-top: 1px solid #a0a0a0;
        }

        .tab {
          display: flex;
          align-items: center;
          box-sizing: border-box;
          width: 93px;
          height: 17px;
          padding-left: 14px;
          background: #fafafa;
          border: 1px solid #a0a0a0;
          border-top: 0;
          border-left-color: #ddd;
        }

        a {
          flex: 1;
          color: #000;
          font-weight: bold;
          text-decoration: none;
        }

        button {
          width: 14px;
          padding: 0;
          border: 0;
          background: none;
        }

        svg {
          display: block;
          margin: auto;
        }
      </style>
      <div class="tab">
        <a href="#before"><slot></slot></a>
        <button aria-label="Close"><svg width="6" height="6"><path d="M0 0l6 6M6 0L0 6" stroke="#999" stroke-width="2"/></svg></button>
      </div>
    `;
  }
}
customElements.define('file-tabs', FileTabs);

class StatusBar extends HTMLElement {
  constructor() {
    super();
    this.attachShadow({ mode: 'open' });
    this.shadowRoot.innerHTML = `
      <style>
        :host {
          display: flex;
          justify-content: flex-end;
          align-items: center;
          gap: 2px;
          flex: none;
          box-sizing: border-box;
          height: 28px;
          padding-right: 2px;
          border-top: 2px solid #fff;
        }

        sf-box {
          height: 24px;
          line-height: 22px;
          padding: 0 3px;
          width: 73px;
        }

        .bits {
          width: 56px;
        }

        .mode {
          width: 67px;
        }

        .bits, .mode {
          font-feature-settings: "palt";
          text-align: center;
        }

        .mode {
          font-size: 11px;
        }

        .length {
          width: 89px;
          margin-right: 4px;
        }

        .space {
          width: 90px;
        }
      </style>
      <sf-box>44,100 Hz</sf-box>
      <sf-box class="bits">16 ビット</sf-box>
      <sf-box class="mode">ステレオ</sf-box>
      <sf-box class="length">00:04:03.676</sf-box>
      <sf-box class="space">333,362.0 MB</sf-box>
    `;
  }
}
customElements.define('status-bar', StatusBar);

class SfApp extends HTMLElement {
  constructor() {
    super();
    this.attachShadow({ mode: 'open' });
    this.shadowRoot.innerHTML = `
      <style>
        :host {
          display: flex;
          flex-direction: column;
          box-sizing: border-box;
          height: 100vh;
          overflow: hidden;
          border: 1px solid #5a5a5a;
          border-top: 0;
        }

        main {
          flex: 1;
          min-height: 0;
          display: flex;
          flex-direction: column;
        }

        hr {
          width: 100%;
          height: 1px;
          flex: none;
          margin: 0;
          border: 0;
          background: linear-gradient(90deg, #a0a0a0 56px, #000 56px);
        }
      </style>
      <title-bar>Sound Forge Pro 11.0 - [before.frg]</title-bar>
      <menu-bar></menu-bar>
      <sf-toolbars></sf-toolbars>
      <time-ruler></time-ruler>
      <main>
        <wave-channel>1</wave-channel>
        <hr>
        <wave-channel>2</wave-channel>
      </main>
      <scroll-strip></scroll-strip>
      <transport-bar></transport-bar>
      <file-tabs>before.frg</file-tabs>
      <status-bar></status-bar>
    `;
  }
}
customElements.define('sf-app', SfApp);
</script>
</body>
</html>
